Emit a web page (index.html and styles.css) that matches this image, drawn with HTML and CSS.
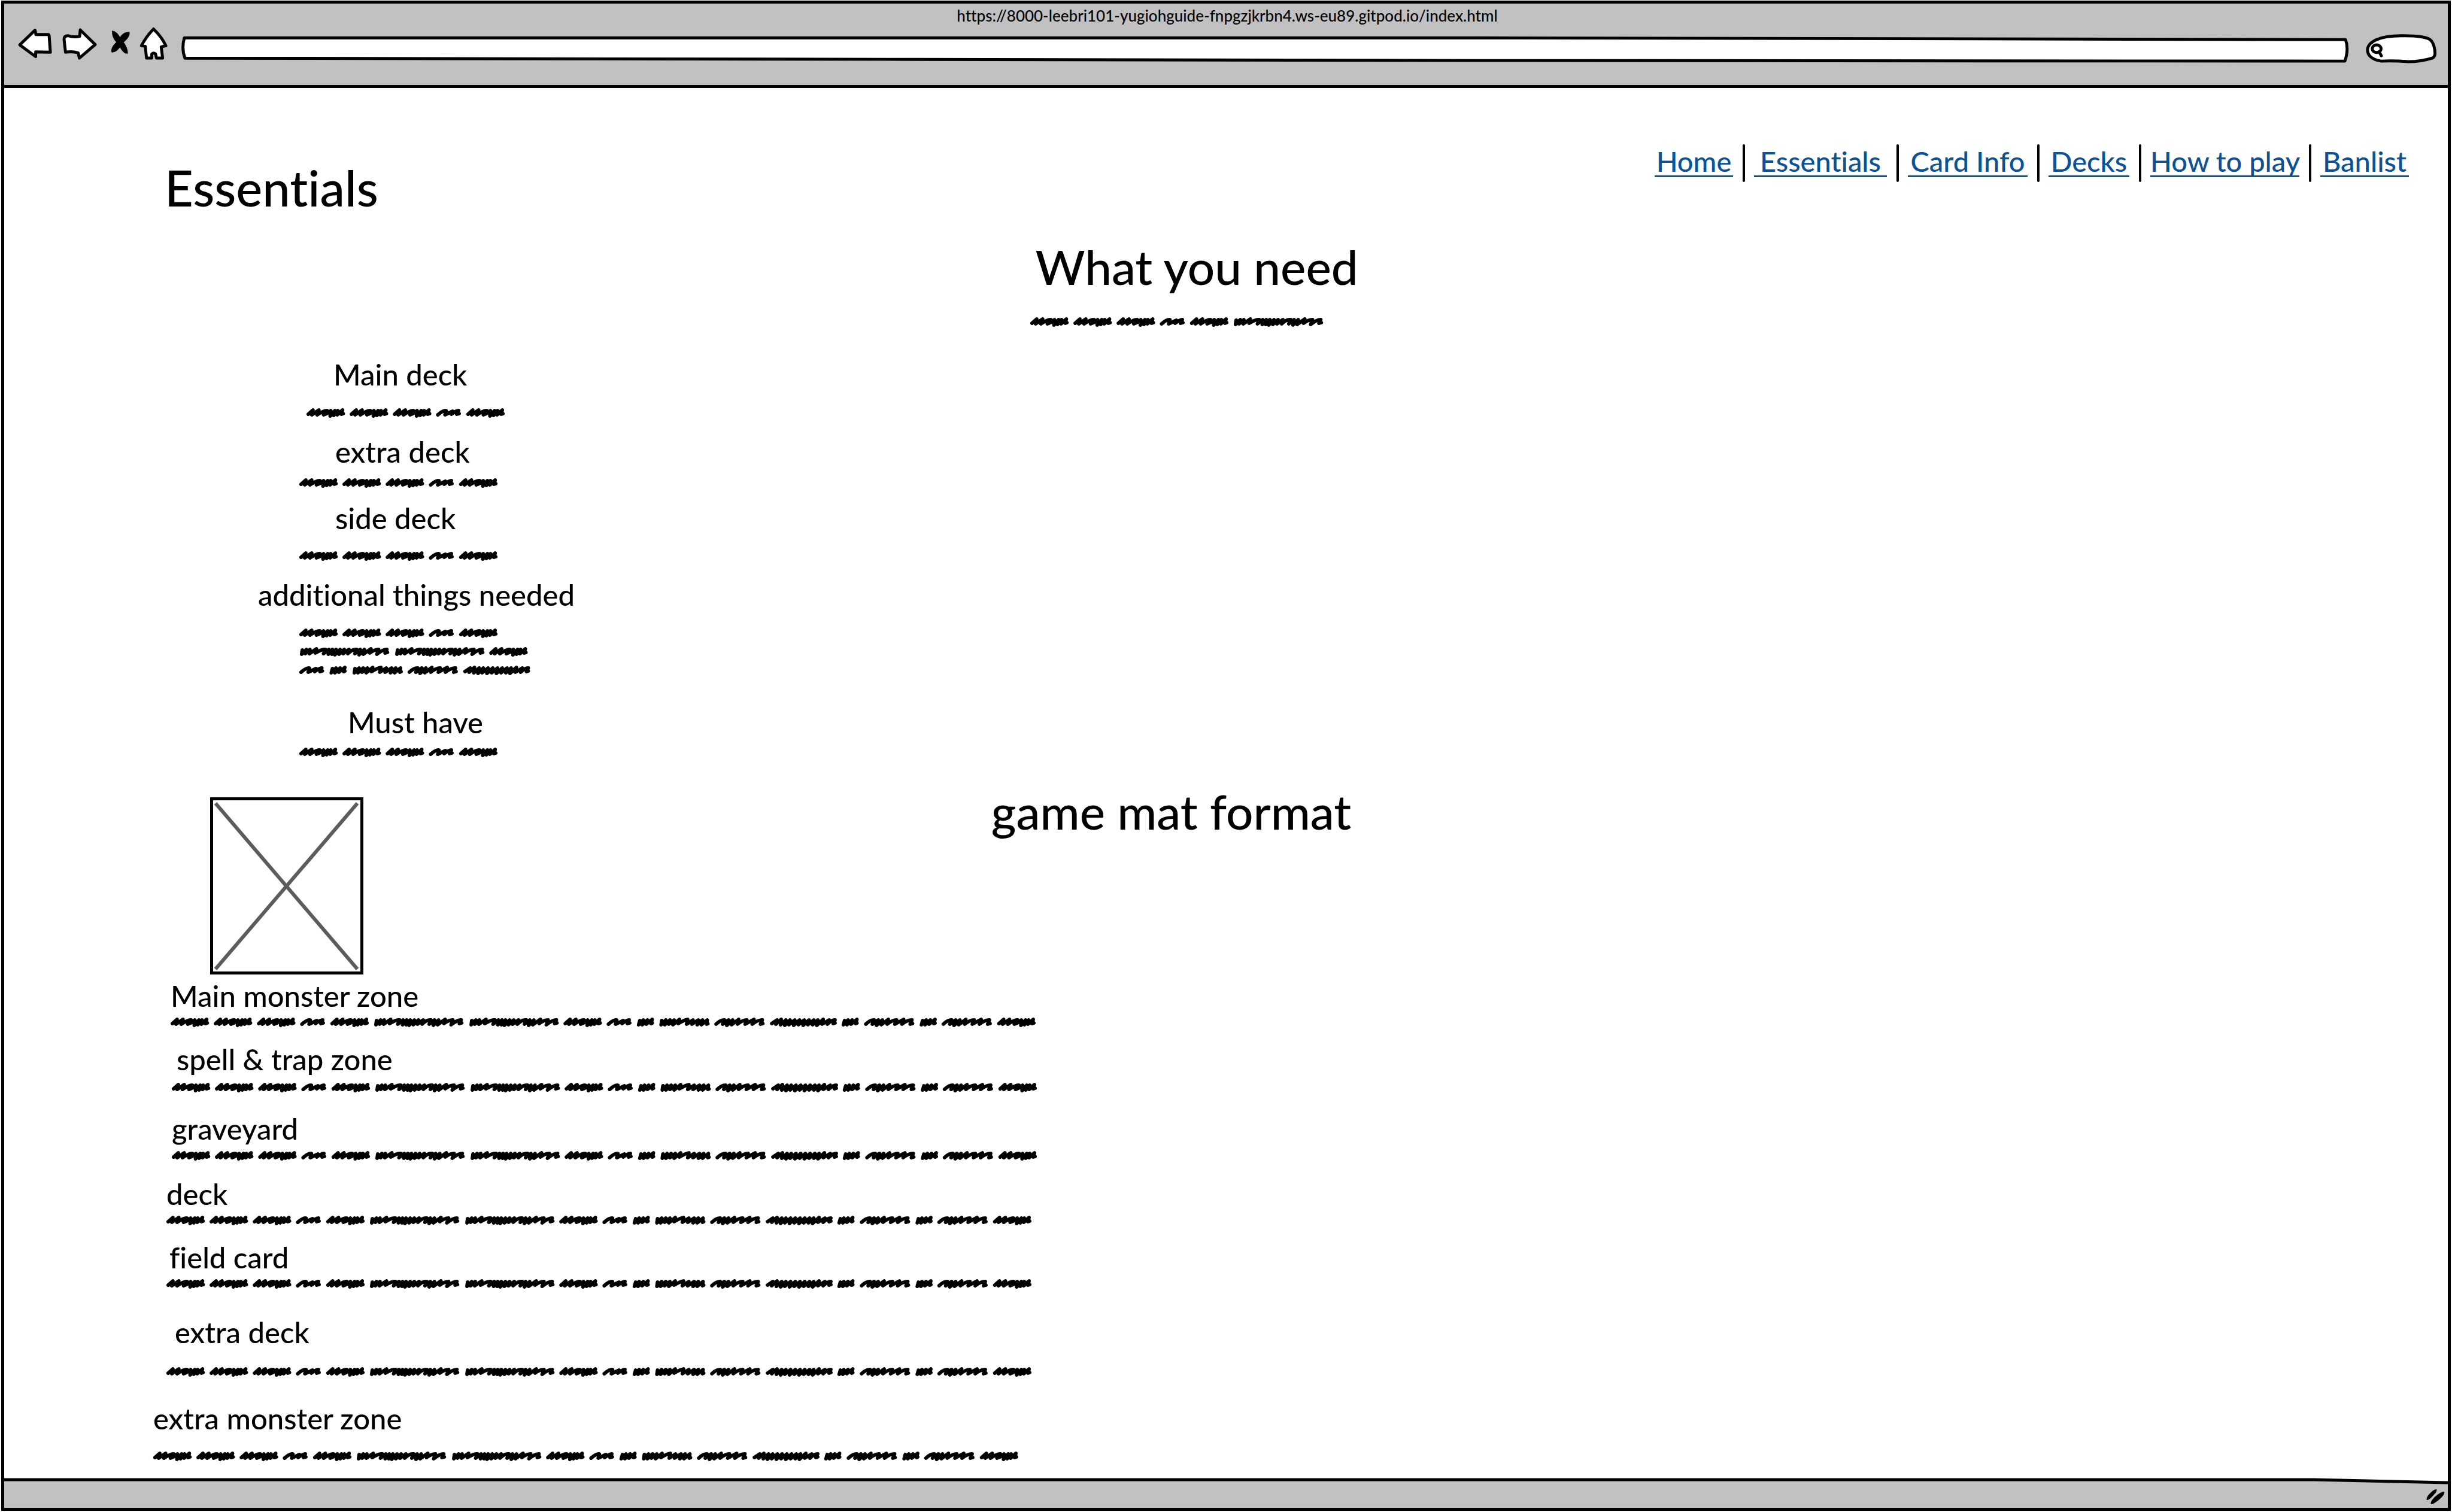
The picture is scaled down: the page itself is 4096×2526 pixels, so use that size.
FILE: index.html
```html
<!DOCTYPE html>
<html lang="en">
<head>
<meta charset="utf-8">
<title>Essentials</title>
<link rel="stylesheet" href="styles.css">
</head>
<body>
<svg class="defs" aria-hidden="true">
  <defs>
    <!-- placeholder words, named by length -->
    <path id="w65" d="M3 10L11 3L9 11L21 3L18 11Q30 3 35 4Q33 8 29 11Q38 8 41 4L40 13L48 4L46 12L53 4L52 11L61 3L59 10L62 9"/>
    <path id="w42" d="M3 11Q12 3 17 4L15 11L28 5L26 10Q34 4 38 4L35 10L39 9"/>
    <path id="w29" d="M5 5L3 12L11 4L9 12L18 4L16 11L26 3L24 10L26 9"/>
    <path id="w152" d="M5 5L4 12L12 4L10 11L18 4L17 11L29 3L27 10Q38 3 44 4L41 11L50 4L49 12L56 4L55 12L62 4L60 13L69 4L67 12L76 4L74 11L84 4L82 11Q90 3 97 4L94 11L103 4L101 13L110 4L108 12L121 3L119 10Q127 4 134 4L131 12Q141 4 148 4L145 10L149 9"/>
    <path id="w86" d="M5 5L4 12L12 4L10 12L19 4L17 11L26 4L24 12L35 3L33 10Q43 4 49 3L47 11L58 4L56 11L67 4L65 12L74 4L72 12L82 4L81 11L83 10"/>
    <path id="w85" d="M3 11Q10 4 17 4L14 11L24 4L21 13L31 4L29 12L41 3L39 11Q48 4 55 4L52 11L67 3L64 11Q73 4 81 4L78 11L82 10"/>
    <path id="w113" d="M3 10L12 4L10 11L19 3L18 12L27 4L25 13L34 4L32 12L42 4L40 13L50 4L48 12L58 4L56 13L66 4L64 12L74 4L72 12L81 4L79 13L90 3L88 11L100 4L97 11Q104 4 110 4L107 10L110 9"/>
    <g id="five-words">
      <use href="#w65"/><use href="#w65" x="73"/><use href="#w65" x="146"/><use href="#w42" x="219"/><use href="#w65" x="270"/>
    </g>
    <g id="long-line">
      <use href="#five-words"/><use href="#w152" x="343"/><use href="#w152" x="504"/><use href="#w65" x="664"/><use href="#w42" x="737"/><use href="#w29" x="788"/><use href="#w86" x="825"/><use href="#w85" x="919"/><use href="#w113" x="1013"/><use href="#w29" x="1134"/><use href="#w85" x="1172"/><use href="#w29" x="1266"/><use href="#w85" x="1303"/><use href="#w65" x="1397"/>
    </g>
  </defs>
</svg>

<div class="window">
  <div class="toolbar">
    <p class="page-url">https://8000-leebri101-yugiohguide-fnpgzjkrbn4.ws-eu89.gitpod.io/index.html</p>
    <div class="controls">
      <button class="tool back" type="button" aria-label="Back"><svg viewBox="28 44 70 60"><path d="M33 75.500L59 50.500L60.500 58L81 58Q83 58 83 61L85 88L60 87.500L60 95.500Z"/></svg></button>
      <button class="tool forward" type="button" aria-label="Forward"><svg viewBox="104 44 66 60"><path d="M161 75L135.500 50L134.500 61Q125 63 115 60Q108 60 108 66L110.500 88Q122 86 132 89L134 98Z"/></svg></button>
      <button class="tool stop" type="button" aria-label="Stop"><svg viewBox="176 44 50 60"><path class="solid" d="M190 52Q197 52 203 63Q209 53 219 54Q220 62 209 71Q216 81 216 90Q209 91 203 79Q197 88 189 88Q187 80 197 71Q189 62 190 52Z"/></svg></button>
      <button class="tool home" type="button" aria-label="Home"><svg viewBox="232 44 54 60"><path d="M260 48.500Q274 62 281 77L273 79L275.500 98L265 98L263.500 91Q260 88 257 91L257 98L248 98L246 78L239.500 77Q247 62 260 48.500Z"/></svg></button>
      <div class="field address">
        <svg viewBox="305 44 3667 65" preserveAspectRatio="none"><path d="M312 63.500L2500 63.500L3965 66.500Q3971 82 3964 103L2500 102L1500 100L313 98Q307 82 312 63.500Z"/></svg>
        <input type="text" aria-label="Address">
      </div>
      <div class="field search">
        <svg viewBox="3998 44 122 65"><path d="M4025 103C4008 101 4001 92 4001.500 83C4003 70 4022 60 4058 60C4085 59.500 4100 62 4107 66C4114 71 4116 83 4116 90Q4116 96 4111 98Q4092 104 4071 104Q4045 102 4025 103Z"/><ellipse cx="4017" cy="82" rx="7.500" ry="6.500"/><path d="M4021 87L4025 94"/></svg>
        <input type="search" aria-label="Search">
      </div>
    </div>
  </div>

  <main>
    <header>
      <h1>Essentials</h1>
      <nav>
        <a href="#home">Home</a><a href="#essentials">Essentials</a><a href="#card-info">Card Info</a><a href="#decks">Decks</a><a href="#how-to-play">How to play</a><a href="#banlist">Banlist</a>
      </nav>
    </header>

    <section class="needs">
      <div class="intro">
        <h2>What you need</h2>
        <svg class="scribble" viewBox="0 0 1463 16"><use href="#five-words"/><use href="#w152" x="343"/></svg>
      </div>
      <div class="entry main-deck"><h3>Main deck</h3><svg class="scribble" viewBox="0 0 1463 16"><use href="#five-words"/></svg></div>
      <div class="entry extra-deck"><h3>extra deck</h3><svg class="scribble" viewBox="0 0 1463 16"><use href="#five-words"/></svg></div>
      <div class="entry side-deck"><h3>side deck</h3><svg class="scribble" viewBox="0 0 1463 16"><use href="#five-words"/></svg></div>
      <div class="entry additional">
        <h3>additional things needed</h3>
        <div class="lines">
          <svg class="scribble" viewBox="0 0 1463 16"><use href="#five-words"/></svg>
          <svg class="scribble" viewBox="0 0 1463 16"><use href="#w152"/><use href="#w152" x="161"/><use href="#w65" x="321"/></svg>
          <svg class="scribble" viewBox="0 0 1463 16"><use href="#w42"/><use href="#w29" x="51"/><use href="#w86" x="89"/><use href="#w85" x="183"/><use href="#w113" x="277"/></svg>
        </div>
      </div>
      <div class="entry must-have"><h3>Must have</h3><svg class="scribble" viewBox="0 0 1463 16"><use href="#five-words"/></svg></div>
    </section>

    <section class="format">
      <div class="mat">
        <svg class="picture" viewBox="0 0 256 296" role="img" aria-label="Game mat"><path class="cross" d="M9 10L246 287M246 10L9 287"/><path class="edge" d="M2.500 2.500L253.500 2.500L253.500 293.500L2.500 293.500Z"/></svg>
        <h2>game mat format</h2>
      </div>
      <div class="entry monster"><h3>Main monster zone</h3><svg class="scribble" viewBox="0 0 1463 16"><use href="#long-line"/></svg></div>
      <div class="entry spell"><h3>spell &amp; trap zone</h3><svg class="scribble" viewBox="0 0 1463 16"><use href="#long-line"/></svg></div>
      <div class="entry graveyard"><h3>graveyard</h3><svg class="scribble" viewBox="0 0 1463 16"><use href="#long-line"/></svg></div>
      <div class="entry deck"><h3>deck</h3><svg class="scribble" viewBox="0 0 1463 16"><use href="#long-line"/></svg></div>
      <div class="entry field-card"><h3>field card</h3><svg class="scribble" viewBox="0 0 1463 16"><use href="#long-line"/></svg></div>
      <div class="entry extra-zone"><h3>extra deck</h3><svg class="scribble" viewBox="0 0 1463 16"><use href="#long-line"/></svg></div>
      <div class="entry extra-monster"><h3>extra monster zone</h3><svg class="scribble" viewBox="0 0 1463 16"><use href="#long-line"/></svg></div>
    </section>
  </main>

  <footer>
    <svg class="rim" viewBox="0 0 4084 10" preserveAspectRatio="none"><path class="fill" d="M0 3L3900 3L4084 8V10H0Z"/><path class="line" d="M0 3L3860 3L4084 8"/></svg>
    <svg class="grip" viewBox="0 0 34 28"><path d="M2 19Q0 15 8 7Q15 0 18 1Q20 4 13 11Q5 20 2 19ZM9 26Q7 22 15 14Q25 5 31 5Q33 9 24 17Q14 26 9 26Z"/></svg>
  </footer>
</div>
</body>
</html>
```
FILE: styles.css
```css
* {
  box-sizing: border-box;
}

body {
  margin: 0;
  padding: 1px 2px 2px;
  background: #fff;
  color: #000;
  font-family: Lato, "Noto Sans", sans-serif;
  font-weight: 500;
  font-variant-ligatures: none;
}

h1, h2, h3, p {
  margin: 0;
  font-weight: 500;
  white-space: nowrap;
}

h1, h2 {
  height: 96px;
  font-size: 80px;
  line-height: 98px;
}

h1 {
  font-size: 83px;
}

h3 {
  height: 60px;
  font-size: 49px;
  line-height: 64px;
}

svg {
  display: block;
}

.defs {
  position: absolute;
  width: 0;
  height: 0;
}

.window {
  display: flex;
  flex-direction: column;
  min-height: calc(100vh - 3px);
  border: 5px solid #000;
}

/* toolbar */
.toolbar {
  height: 141px;
  padding: 5px 17px 0 21px;
  border-bottom: 5px solid #000;
  background: #c1c1c1;
}

.page-url {
  font-size: 26px;
  line-height: 30px;
  text-align: center;
}

.controls {
  display: flex;
  gap: 6px;
  height: 64px;
  margin-top: 3px;
}

.tool {
  height: 59px;
  padding: 0;
  border: 0;
  background: none;
}

.tool svg {
  width: 100%;
  height: 100%;
}

.back { width: 69px; }
.forward { width: 65px; }
.stop { width: 49px; }
.home { width: 53px; }

.controls path,
.controls ellipse {
  fill: #fff;
  stroke: #000;
  stroke-width: 5;
  stroke-linejoin: round;
  stroke-linecap: round;
}

.controls .solid {
  fill: #000;
  stroke-width: 1;
}

.field {
  position: relative;
}

.field svg {
  width: 100%;
  height: 100%;
}

.field input {
  position: absolute;
  inset: 16px 10px 10px 40px;
  width: calc(100% - 50px);
  border: 0;
  background: none;
  font: inherit;
  font-size: 24px;
}

.address {
  flex: 1;
  margin-left: 13px;
}

.search {
  width: 121px;
  margin-left: 20px;
}

/* page */
main {
  flex: 1;
  padding-top: 94px;
}

header {
  display: flex;
  justify-content: space-between;
  align-items: flex-start;
  padding: 0 65px 0 268px;
}

h1 {
  margin-top: 23px;
}

nav {
  display: grid;
  grid-template-columns: 131px 222px 200px 135px 249px 148px;
  column-gap: 35px;
}

nav a {
  position: relative;
  height: 55px;
  border-bottom: 3px solid #0b5394;
  color: #0b5394;
  font-size: 47px;
  line-height: 56px;
  text-align: center;
  text-decoration: none;
  white-space: nowrap;
}

nav a + a::before {
  content: "";
  position: absolute;
  top: 0;
  left: -19px;
  width: 4px;
  height: 63px;
  border-radius: 2px;
  background: #000;
}

.scribble {
  width: 1446px;
  height: 16px;
  overflow: visible;
  fill: none;
  stroke: #000;
  stroke-width: 6;
  stroke-linecap: round;
  stroke-linejoin: round;
}

.intro {
  display: grid;
  row-gap: 38px;
  margin: 36px 0 0 42%;
}

.intro h2 {
  margin-left: 8px;
}

.entry {
  display: grid;
  justify-items: start;
}

.lines {
  display: grid;
  row-gap: 15px;
}

.main-deck { margin: 47px 0 0 505px; row-gap: 29px; }
.main-deck h3 { margin-left: 45px; }
.extra-deck { margin: 24px 0 0 493px; row-gap: 17px; }
.extra-deck h3 { margin-left: 60px; }
.side-deck { margin: 18px 0 0 493px; row-gap: 28px; }
.side-deck h3 { margin-left: 60px; }
.additional { margin: 24px 0 0 424px; row-gap: 29px; }
.additional .lines { margin-left: 69px; }
.must-have { margin: 46px 0 0 493px; row-gap: 15px; }
.must-have h3 { margin-left: 81px; }

.mat {
  display: grid;
  grid-template-columns: 40% auto;
  margin-top: 41px;
}

.mat h2 {
  margin-left: 16px;
}

.picture {
  width: 256px;
  height: 296px;
  margin: 26px 0 0 344px;
  fill: none;
}

.picture .edge {
  stroke: #000;
  stroke-width: 5;
}

.picture .cross {
  stroke: #5c5c5c;
  stroke-width: 6;
}

.monster { margin: 3px 0 0 278px; row-gap: 9px; }
.spell { margin: 21px 0 0 280px; row-gap: 12px; }
.spell h3 { margin-left: 8px; }
.graveyard { margin: 28px 0 0 280px; row-gap: 10px; }
.deck { margin: 23px 0 0 271px; row-gap: 9px; }
.field-card { margin: 21px 0 0 271px; row-gap: 9px; }
.field-card h3 { margin-left: 5px; }
.extra-zone { margin: 40px 0 0 271px; row-gap: 31px; }
.extra-zone h3 { margin-left: 14px; }
.extra-monster { margin: 37px 0 0 249px; row-gap: 28px; }

footer {
  display: grid;
  grid-template-rows: 10px 1fr;
  height: 50px;
  background: linear-gradient(#fff 10px, #c1c1c1 10px);
}

.rim {
  width: 100%;
  height: 10px;
  overflow: visible;
}

.rim .fill {
  fill: #c1c1c1;
}

.rim .line {
  fill: none;
  stroke: #000;
  stroke-width: 5;
}

.grip {
  justify-self: end;
  width: 34px;
  height: 28px;
  margin: 8px 3px 0 0;
}
```
